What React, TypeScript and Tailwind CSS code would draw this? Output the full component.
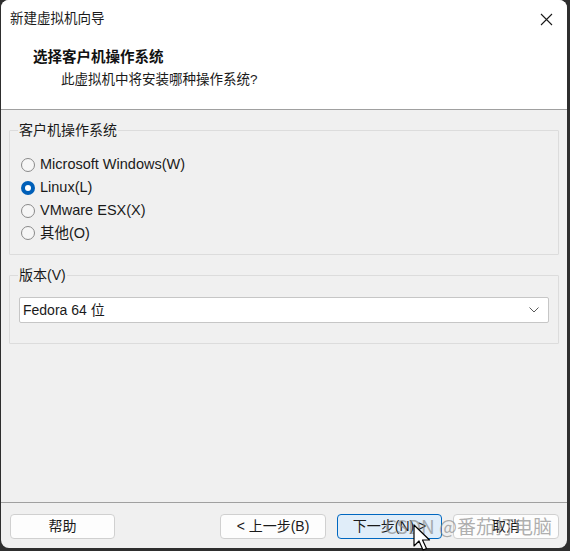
import React, { useState } from 'react';

const FONT = "font-['Liberation_Sans','Noto_Sans_CJK_SC',sans-serif]";

const Radio: React.FC<{ label: string; checked?: boolean; onSelect: () => void }> = ({ label, checked, onSelect }) => (
  <div className="flex items-center h-[22.7px] cursor-default" onClick={onSelect}>
    {checked ? (
      <span className="w-[14px] h-[14px] rounded-full bg-[#005fb8] flex items-center justify-center">
        <span className="w-[6px] h-[6px] rounded-full bg-white"></span>
      </span>
    ) : (
      <span className="w-[14px] h-[14px] rounded-full border border-[#8a8a8a] bg-[#f6f6f6]"></span>
    )}
    <span className="ml-[5px] text-[14.5px] text-[#1a1a1a]">{label}</span>
  </div>
);

const Button: React.FC<{ children: React.ReactNode; primary?: boolean; className?: string }> = ({ children, primary, className }) => (
  <div
    className={`h-[25px] w-[105px] rounded-[4px] border flex items-center justify-center text-[14px] text-[#1a1a1a] ${
      primary ? 'bg-[#e0edf9] border-[#0067c0]' : 'bg-[#fdfdfd] border-[#d0d0d0]'
    } ${className || ''}`}
  >
    {children}
  </div>
);

const App: React.FC = () => {
  const [os, setOs] = useState('linux');
  const options = [
    { id: 'win', label: 'Microsoft Windows(W)' },
    { id: 'linux', label: 'Linux(L)' },
    { id: 'esx', label: 'VMware ESX(X)' },
    { id: 'other', label: '其他(O)' },
  ];

  return (
    <div className={`w-[570px] h-[551px] bg-[#2e2e2e] relative overflow-hidden ${FONT}`}>
      <div className="ml-[1px] w-[566px] h-[548px] rounded-[8px] overflow-hidden bg-[#f0f0f0] flex flex-col">
        {/* Header */}
        <div className="bg-white h-[110px] border-b border-[#a0a0a0] flex flex-col">
          <div className="h-[38px] flex items-center justify-between pl-[9px] pr-[13px]">
            <span className="text-[13.5px] text-[#1a1a1a]">新建虚拟机向导</span>
            <svg width="13" height="13" viewBox="0 0 13 13" className="mr-[1px]">
              <path d="M1 1L12 12M12 1L1 12" stroke="#1a1a1a" strokeWidth="1.1" />
            </svg>
          </div>
          <div className="pl-[32px] mt-[9px] text-[14.5px] font-bold text-[#111] leading-[20px]">选择客户机操作系统</div>
          <div className="pl-[60px] mt-[3px] text-[13.5px] text-[#1a1a1a] leading-[20px]">此虚拟机中将安装哪种操作系统?</div>
        </div>

        {/* Body */}
        <div className="flex-1 px-[8px] pt-[20px]">
          <div className="relative border border-[#dcdcdc] rounded-[1px] h-[125px] pt-[23px] pl-[11px]">
            <span className="absolute -top-[10px] left-[8px] px-[1px] bg-[#f0f0f0] text-[14px] leading-[18px] text-[#1a1a1a]">客户机操作系统</span>
            {options.map(o => (
              <Radio key={o.id} label={o.label} checked={os === o.id} onSelect={() => setOs(o.id)} />
            ))}
          </div>

          <div className="relative border border-[#dcdcdc] rounded-[1px] h-[69px] mt-[20px] pt-[21px] px-[9px]">
            <span className="absolute -top-[10px] left-[8px] px-[1px] bg-[#f0f0f0] text-[14px] leading-[18px] text-[#1a1a1a]">版本(V)</span>
            <div className="h-[26px] bg-white border border-[#c6c6c6] rounded-[2px] flex items-center justify-between pl-[3px] pr-[9px]">
              <span className="text-[14px] text-[#1a1a1a]">Fedora 64 位</span>
              <svg width="10" height="6" viewBox="0 0 10 6">
                <path d="M0.5 0.5L5 5L9.5 0.5" stroke="#5a5a5a" strokeWidth="1" fill="none" />
              </svg>
            </div>
          </div>
        </div>

        {/* Footer */}
        <div className="h-[46px] border-t border-[#a0a0a0] flex items-start pt-[11px] pl-[9px]">
          <Button>帮助</Button>
          <Button className="ml-[105px] w-[106px]">&lt; 上一步(B)</Button>
          <Button primary className="ml-[11px]">下一步(N) &gt;</Button>
          <Button className="ml-[11px] w-[106px]">取消</Button>
        </div>
      </div>

      {/* watermark overlay */}
      <div className="absolute left-[385px] top-[513px] text-[19px] leading-[26px] text-[#8c8c8c]/70 font-['Noto_Sans_CJK_SC',sans-serif] whitespace-nowrap">
        CSDN @番茄打电脑
      </div>

      {/* mouse cursor */}
      <svg className="absolute left-[413px] top-[524px]" width="20" height="27" viewBox="0 0 20 27">
        <path d="M1 1L1 22L6 17L10 26L13.5 24.5L9.5 16L16.5 16Z" fill="#fff" stroke="#000" strokeWidth="1.2" strokeLinejoin="round" />
      </svg>
    </div>
  );
};

export default App;
